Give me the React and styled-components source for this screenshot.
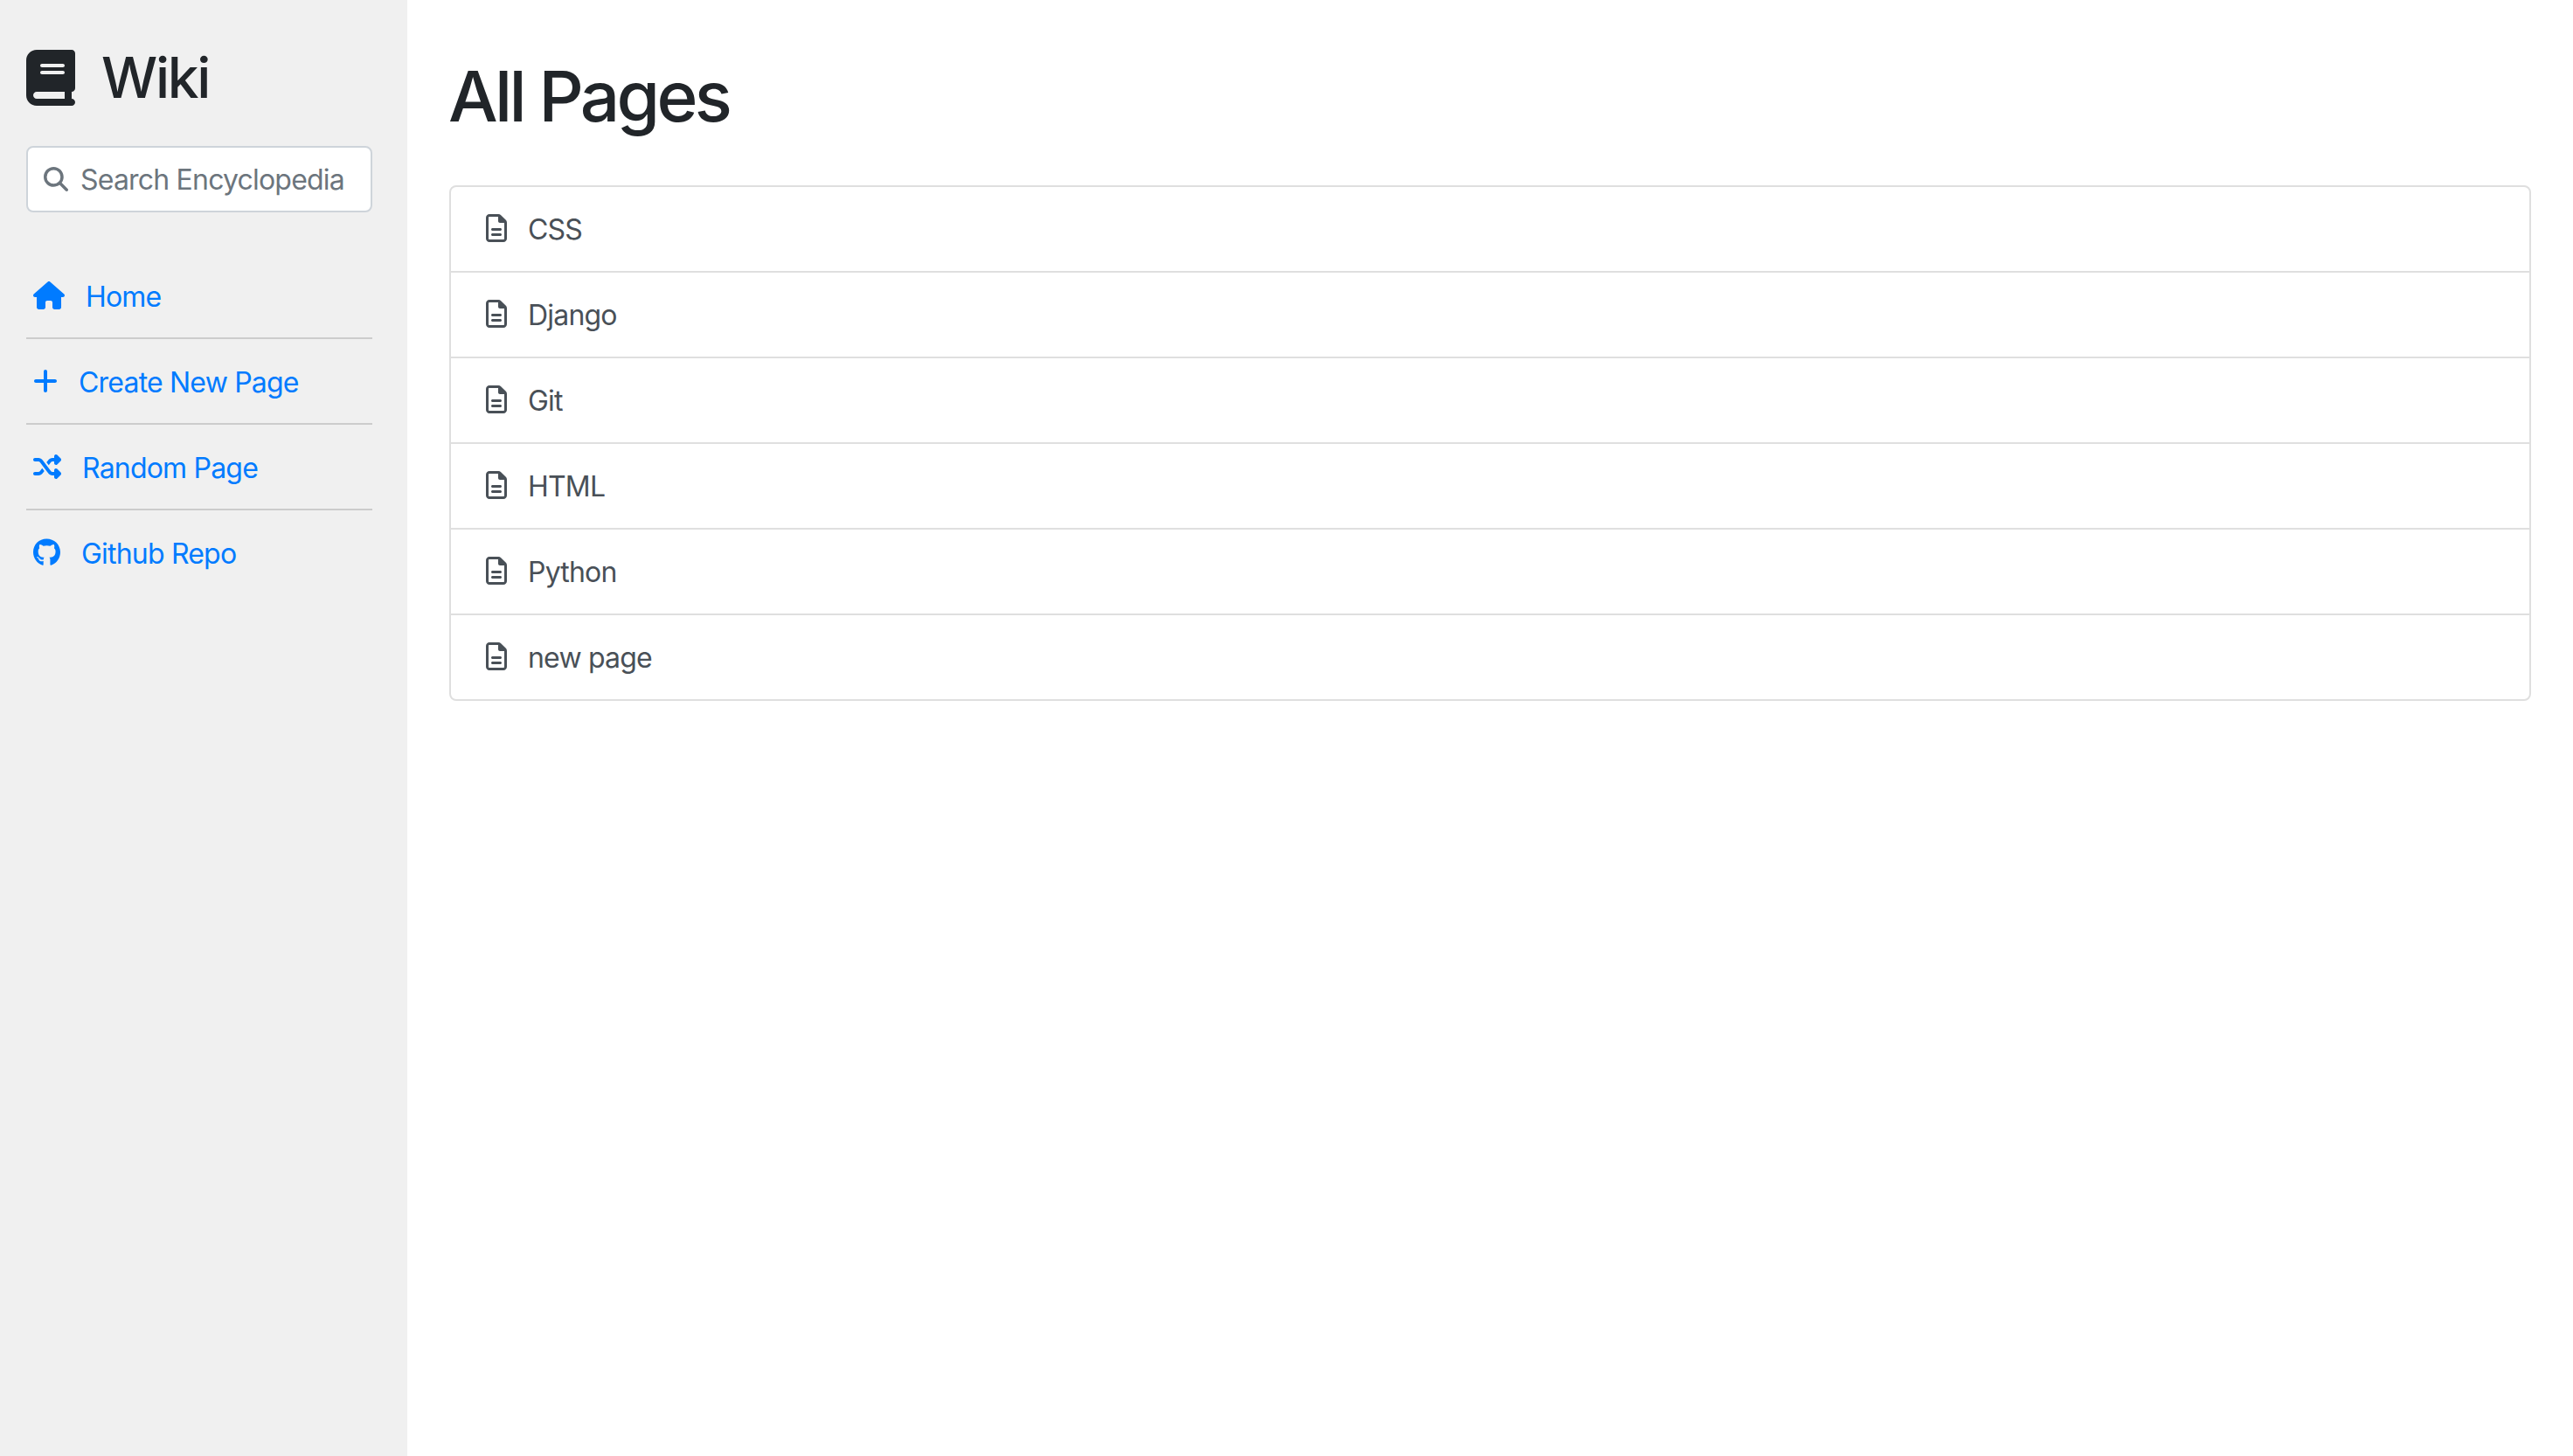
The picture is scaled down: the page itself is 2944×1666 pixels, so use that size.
import React from 'react'
import styled, { createGlobalStyle } from 'styled-components'
import {
 FaBook,
 FaHouse,
 FaPlus,
 FaShuffle,
 FaGithub,
 FaRegFileLines,
 FaMagnifyingGlass,
} from 'react-icons/fa6'

const GlobalStyle = createGlobalStyle`
 html, body {
  margin: 0;
  padding: 0;
  background: #fff;
 }
 body {
  font-family: Inter, 'Noto Sans', sans-serif;
  font-size: 32px;
  line-height: 48px;
  letter-spacing: -0.8px;
  color: #212529;
 }
 * {
  box-sizing: border-box;
 }
`

const Layout = styled.div`
 display: flex;
 min-height: 1666px;
`

const Sidebar = styled.aside`
 width: 466px;
 flex-shrink: 0;
 background-color: #f0f0f0;
 padding: 50px 40px 0 30px;
`

const Brand = styled.h2`
 display: flex;
 align-items: center;
 margin: 0 0 40px;
 font-size: 64px;
 font-weight: 500;
 line-height: 77px;
 letter-spacing: -2.3px;
 svg {
  width: 56px;
  height: 64px;
  margin-right: 30px;
  flex-shrink: 0;
 }
`

const SearchBox = styled.label`
 display: flex;
 align-items: center;
 height: 76px;
 padding: 0 0 0 18px;
 background: #fff;
 border: 2px solid #ced4da;
 border-radius: 8px;
 color: #6c757d;
 svg {
  width: 28px;
  height: 28px;
  margin-right: 14px;
  flex-shrink: 0;
 }
`

const SearchInput = styled.input`
 flex: 1;
 min-width: 0;
 border: 0;
 outline: 0;
 padding: 2px 0 0;
 background: transparent;
 font: inherit;
 letter-spacing: inherit;
 color: #495057;
 &::placeholder {
  color: #6c757d;
  opacity: 1;
 }
`

const NavList = styled.nav`
 margin-top: 47px;
`

const NavLink = styled.a`
 display: flex;
 align-items: center;
 padding: 24px 8px;
 color: #007bff;
 text-decoration: none;
 border-bottom: 2px solid #ccc;
 &:last-child {
  border-bottom: 0;
 }
 svg {
  width: ${(props) => props.$iconWidth}px;
  height: 32px;
  margin-right: 24px;
  flex-shrink: 0;
 }
`

const RowLabel = styled.span`
 margin: 2px 0 -2px;
`

const Main = styled.main`
 flex: 1;
 min-width: 0;
 padding: 62px 48px 0;
`

const Title = styled.h1`
 margin: 0 0 54px -1px;
 font-size: 80px;
 font-weight: 500;
 line-height: 96px;
 letter-spacing: -3.7px;
`

const PageList = styled.ul`
 list-style: none;
 margin: 0;
 padding: 0;
 border: 2px solid #dfdfdf;
 border-radius: 8px;
`

const PageItem = styled.li`
 display: flex;
 align-items: center;
 padding: 23px 40px 25px;
 color: #495057;
 & + & {
  border-top: 2px solid #dfdfdf;
 }
 svg {
  width: 24px;
  height: 32px;
  margin-right: 24px;
  flex-shrink: 0;
 }
`

const navItems = [
 { label: 'Home', Icon: FaHouse, iconWidth: 36 },
 { label: 'Create New Page', Icon: FaPlus, iconWidth: 28 },
 { label: 'Random Page', Icon: FaShuffle, iconWidth: 32 },
 { label: 'Github Repo', Icon: FaGithub, iconWidth: 31 },
]

const pages = ['CSS', 'Django', 'Git', 'HTML', 'Python', 'new page']

function App() {
 return (
  <Layout>
   <GlobalStyle />
   <Sidebar>
    <Brand>
     <FaBook />
     Wiki
    </Brand>
    <SearchBox>
     <FaMagnifyingGlass />
     <SearchInput placeholder="Search Encyclopedia" />
    </SearchBox>
    <NavList>
     {navItems.map(({ label, Icon, iconWidth }) => (
      <NavLink href="#" key={label} $iconWidth={iconWidth}>
       <Icon />
       <RowLabel>{label}</RowLabel>
      </NavLink>
     ))}
    </NavList>
   </Sidebar>
   <Main>
    <Title>All Pages</Title>
    <PageList>
     {pages.map((page) => (
      <PageItem key={page}>
       <FaRegFileLines />
       <RowLabel>{page}</RowLabel>
      </PageItem>
     ))}
    </PageList>
   </Main>
  </Layout>
 )
}

export default App
